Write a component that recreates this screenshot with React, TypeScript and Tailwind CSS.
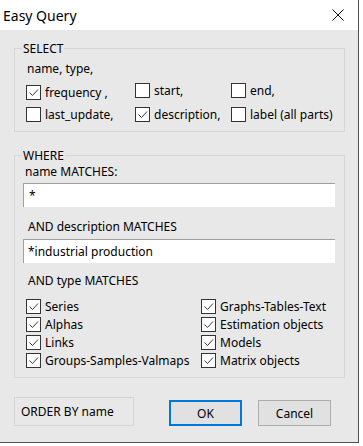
import React from "react";

const font = { fontFamily: '"Noto Sans", "Liberation Sans", sans-serif' };

function Box({ checked }: { checked: boolean }) {
  return (
    <div className="w-[15px] h-[15px] shrink-0 border border-[#333333] bg-white">
      {checked && (
        <svg width="13" height="13" viewBox="0 0 13 13" className="block">
          <polyline points="2.5,6.5 5.5,9.5 11,3.5" fill="none" stroke="#3a3a3a" strokeWidth="1" />
        </svg>
      )}
    </div>
  );
}

function Check({ label, checked, className = "" }: { label: string; checked: boolean; className?: string }) {
  return (
    <div className={"flex items-center h-[15px] " + className}>
      <Box checked={checked} />
      <span className="ml-[4px] whitespace-nowrap text-[#000] leading-[15px]">{label}</span>
    </div>
  );
}

export default function App() {
  return (
    <div className="w-[363px] h-[446px] bg-white overflow-hidden text-[12px] leading-[15px] text-black" style={font}>
      <div className="w-[359px] h-[443px] border-r border-b border-[#505050] flex flex-col">
        {/* title bar */}
        <div className="h-[30px] bg-white flex items-center shrink-0">
          <span className="ml-[3px] text-[14px] text-black">Easy Query</span>
          <div className="ml-auto mr-[14px]">
            <svg width="12" height="12" viewBox="0 0 12 12" className="block">
              <path d="M0.5 0.5 L11.5 11.5 M11.5 0.5 L0.5 11.5" stroke="#111" strokeWidth="1" fill="none" />
            </svg>
          </div>
        </div>
        {/* body */}
        <div className="flex-1 bg-[#e8e8e8] flex flex-col pl-[14px]">
          <fieldset className="mt-[11px] w-[331px] border border-[#d6d6d6] pb-[9px]">
            <legend className="ml-[7px] px-[1px] leading-[15px]">SELECT</legend>
            <div className="ml-[12px] mt-[5px]">name, type,</div>
            <div className="grid grid-cols-[109px_96px_1fr] pl-[11px] mt-[7px]">
              <Check label="frequency ," checked className="mt-[2px]" />
              <Check label="start," checked={false} />
              <Check label="end," checked={false} />
            </div>
            <div className="grid grid-cols-[109px_96px_1fr] pl-[11px] mt-[7px]">
              <Check label="last_update," checked={false} />
              <Check label="description," checked />
              <Check label="label (all parts)" checked={false} />
            </div>
          </fieldset>

          <fieldset className="mt-[16px] w-[331px] border border-[#d6d6d6] pb-[9px]">
            <legend className="ml-[7px] px-[1px] leading-[15px]">WHERE</legend>
            <div className="ml-[10px] mt-[1px]">name MATCHES:</div>
            <div className="ml-[8px] mt-[4px] w-[312px] h-[24px] bg-white border-t border-l border-[#a0a0a0] flex items-center pl-[5px]">
              *
            </div>
            <div className="ml-[13px] mt-[12px]">AND description MATCHES</div>
            <div className="ml-[8px] mt-[5px] w-[312px] h-[24px] bg-white border-t border-l border-[#a0a0a0] flex items-center pl-[4px]">
              *industrial production
            </div>
            <div className="ml-[13px] mt-[10px]">AND type MATCHES</div>
            <div className="grid grid-cols-[175px_1fr] gap-y-[3px] pl-[11px] mt-[11px]">
              <Check label="Series" checked />
              <Check label="Graphs-Tables-Text" checked />
              <Check label="Alphas" checked />
              <Check label="Estimation objects" checked />
              <Check label="Links" checked />
              <Check label="Models" checked />
              <Check label="Groups-Samples-Valmaps" checked />
              <Check label="Matrix objects" checked />
            </div>
          </fieldset>

          <div className="flex items-start mt-[19px]">
            <div className="w-[120px] h-[29px] border border-[#d4d4d4] flex items-center pl-[6px]">ORDER BY name</div>
            <div className="ml-[35px] mt-[3px] w-[73px] h-[26px] border-2 border-[#0078d7] bg-[#e1e1e1] flex items-center justify-center">
              OK
            </div>
            <div className="ml-[16px] mt-[3px] w-[73px] h-[26px] border border-[#adadad] bg-[#e1e1e1] flex items-center justify-center">
              Cancel
            </div>
          </div>
        </div>
      </div>
    </div>
  );
}
